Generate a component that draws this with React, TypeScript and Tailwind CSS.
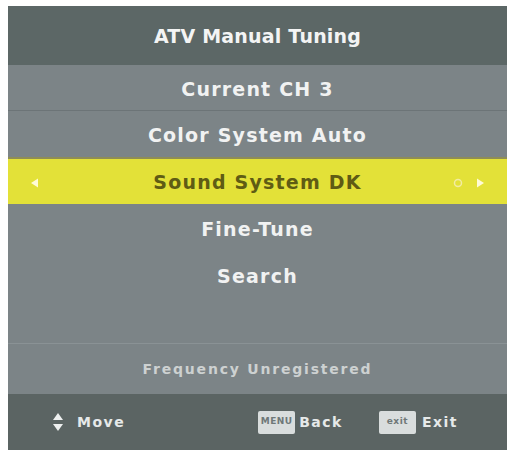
import React from "react";

const font = { fontFamily: '"DejaVu Sans", "Liberation Sans", sans-serif' };

function Row({ children, className = "" }: { children: React.ReactNode; className?: string }) {
  return (
    <div className={`flex items-center justify-center pt-[3px] text-[19px] font-bold tracking-[1.2px] text-[#f1f2f2] ${className}`}>
      {children}
    </div>
  );
}

function KeyBox({ label }: { label: string }) {
  return (
    <div className="flex h-[23px] w-[37px] items-center justify-center rounded-[2px] bg-[#d9dddd] text-[9px] font-bold tracking-[0.5px] text-[#6f7878]">
      {label}
    </div>
  );
}

export default function App() {
  return (
    <div className="h-[453px] w-[512px] bg-white pl-[8px] pt-[6px]" style={font}>
      <div className="flex h-[444px] w-[499px] flex-col overflow-hidden bg-[#7c8487]">
        <div className="flex h-[59px] items-center justify-center bg-[#5c6766] pt-[2px] text-[19px] font-bold tracking-[0.2px] text-[#f3f4f4]">
          ATV Manual Tuning
        </div>
        <Row className="h-[46px] border-b border-[#6c7477]">Current CH 3</Row>
        <Row className="h-[46px]">Color System Auto</Row>
        <div className="grid h-[47px] grid-cols-[1fr_auto_1fr] items-center border-t-2 border-[#8f8d56] bg-[#e3e138] px-[22px] pt-[2px]">
          <div className="flex items-center">
            <svg width="10" height="12" viewBox="0 0 10 12">
              <path d="M1 6 L8 1.5 L8 10.5 Z" fill="#fffbd6" />
            </svg>
          </div>
          <div className="text-[19px] font-bold tracking-[1.2px] text-[#5f5c14]">Sound System DK</div>
          <div className="flex items-center justify-end gap-[12px]">
            <svg width="10" height="10" viewBox="0 0 10 10">
              <circle cx="5" cy="5" r="3.5" fill="none" stroke="#f2eca2" strokeWidth="1.5" />
            </svg>
            <svg width="10" height="12" viewBox="0 0 10 12">
              <path d="M9 6 L2 1.5 L2 10.5 Z" fill="#fffbd6" />
            </svg>
          </div>
        </div>
        <Row className="h-[48px]">Fine-Tune</Row>
        <Row className="h-[46px]">Search</Row>
        <div className="h-[46px] border-b border-[#8a9295]" />
        <div className="flex h-[50px] items-center justify-center text-[14px] font-bold tracking-[1.8px] text-[#cdd1d1]">
          Frequency Unregistered
        </div>
        <div className="flex flex-1 items-center bg-[#5b6463] pl-[44px] pr-[49px] text-[14px] font-bold tracking-[1.5px] text-[#e6e9e9]">
          <div className="flex items-center gap-[13px]">
            <svg width="12" height="20" viewBox="0 0 12 20">
              <path d="M6 1 L11 8 L1 8 Z" fill="#eef0f0" />
              <path d="M6 19 L11 12 L1 12 Z" fill="#eef0f0" />
            </svg>
            <span>Move</span>
          </div>
          <div className="flex-1" />
          <div className="flex items-center gap-[4px]">
            <KeyBox label="MENU" />
            <span>Back</span>
          </div>
          <div className="ml-[36px] flex items-center gap-[6px]">
            <KeyBox label="exit" />
            <span>Exit</span>
          </div>
        </div>
      </div>
    </div>
  );
}
